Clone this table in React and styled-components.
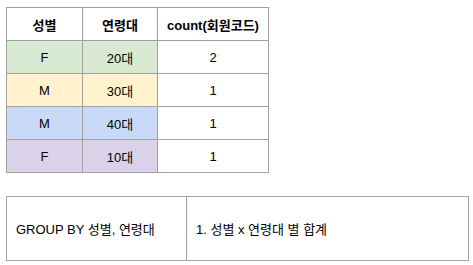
import styled, { createGlobalStyle } from "styled-components";

const GlobalStyle = createGlobalStyle`
  body {
    margin: 0;
    background: #ffffff;
    font-family: "Liberation Sans", Arial, "Noto Sans CJK KR", sans-serif;
    color: #000000;
  }
`;

const Page = styled.div`
  padding: 7px 0 0 6px;
`;

const Grid = styled.table`
  border-collapse: collapse;
  table-layout: fixed;
  font-size: 13px;
`;

const ResultTable = styled(Grid)`
  width: 263px;
`;

const NoteTable = styled(Grid)`
  width: 463px;
  margin-top: 23px;
`;

const HeadCell = styled.th`
  border: 1px solid #a0a0a0;
  height: 32px;
  padding: 0;
  font-weight: bold;
  text-align: center;
  background: #ffffff;
`;

const Cell = styled.td`
  border: 1px solid #a0a0a0;
  height: 32px;
  padding: 0;
  text-align: center;
  background: ${(p) => p.$bg || "#ffffff"};
`;

const NoteCell = styled.td`
  border: 1px solid #a0a0a0;
  height: 63px;
  padding: 0 0 0 9px;
  text-align: left;
  vertical-align: middle;
`;

const rows = [
  { gender: "F", age: "20대", count: 2, bg: "#d9ead3" },
  { gender: "M", age: "30대", count: 1, bg: "#fff2cc" },
  { gender: "M", age: "40대", count: 1, bg: "#c9daf8" },
  { gender: "F", age: "10대", count: 1, bg: "#d9d2e9" },
];

export default function App() {
  return (
    <>
      <GlobalStyle />
      <Page>
        <ResultTable>
          <colgroup>
            <col style={{ width: 76 }} />
            <col style={{ width: 75 }} />
            <col style={{ width: 111 }} />
          </colgroup>
          <thead>
            <tr>
              <HeadCell>성별</HeadCell>
              <HeadCell>연령대</HeadCell>
              <HeadCell>count(회원코드)</HeadCell>
            </tr>
          </thead>
          <tbody>
            {rows.map((r, i) => (
              <tr key={i}>
                <Cell $bg={r.bg}>{r.gender}</Cell>
                <Cell $bg={r.bg}>{r.age}</Cell>
                <Cell>{r.count}</Cell>
              </tr>
            ))}
          </tbody>
        </ResultTable>
        <NoteTable>
          <colgroup>
            <col style={{ width: 180 }} />
            <col style={{ width: 282 }} />
          </colgroup>
          <tbody>
            <tr>
              <NoteCell>GROUP BY 성별, 연령대</NoteCell>
              <NoteCell>1. 성별 x 연령대 별 합계</NoteCell>
            </tr>
          </tbody>
        </NoteTable>
      </Page>
    </>
  );
}
